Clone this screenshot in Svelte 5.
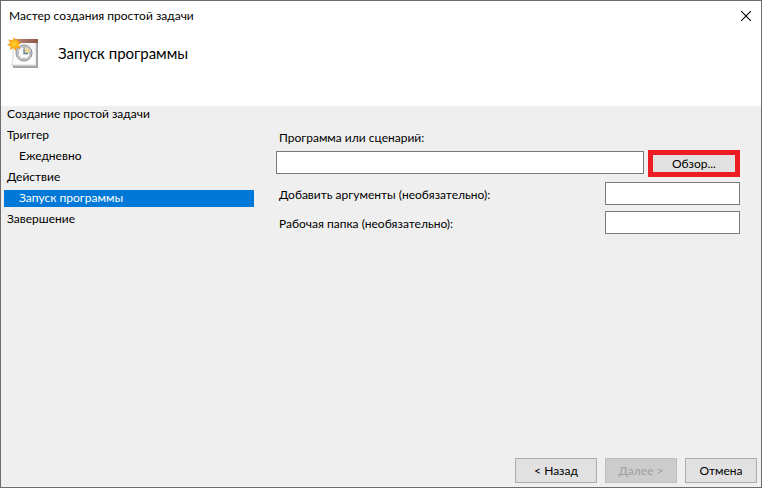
<script lang="ts">
	const steps = [
		{ title: 'Создание простой задачи', nested: false },
		{ title: 'Триггер', nested: false },
		{ title: 'Ежедневно', nested: true },
		{ title: 'Действие', nested: false },
		{ title: 'Запуск программы', nested: true },
		{ title: 'Завершение', nested: false }
	];

	const current = 4;

	let program = $state('');
	let args = $state('');
	let folder = $state('');
</script>

<main class="wizard">
	<header class="wizard__header">
		<div class="titlebar">
			<span class="titlebar__text">Мастер создания простой задачи</span>
			<button class="titlebar__close" type="button" aria-label="Закрыть">
				<svg viewBox="0 0 10 10" width="10" height="10" fill="none" stroke="#000" stroke-width="1.1">
					<path d="M0 0l10 10M10 0L0 10" />
				</svg>
			</button>
		</div>

		<div class="banner">
			<svg class="banner__icon" viewBox="0 0 32 32" width="32" height="32" aria-hidden="true">
				<defs>
					<linearGradient id="paper" x1="0" y1="0" x2="0" y2="1">
						<stop offset="0" stop-color="#f4f4f4" />
						<stop offset="1" stop-color="#fff" />
					</linearGradient>
					<linearGradient id="band" x1="0" y1="0" x2="1" y2="0">
						<stop offset="0" stop-color="#c08a76" />
						<stop offset="1" stop-color="#8c5848" />
					</linearGradient>
					<linearGradient id="rim" x1="0" y1="0" x2="1" y2="1">
						<stop offset="0" stop-color="#9a9ea2" />
						<stop offset="1" stop-color="#80868c" />
					</linearGradient>
					<radialGradient id="sun">
						<stop offset="0.2" stop-color="#ffc928" />
						<stop offset="1" stop-color="#f58f0c" />
					</radialGradient>
				</defs>
				<!-- Pages -->
				<path d="M6 5h25v26H6z" fill="#a4a4a4" />
				<path d="M7 5h22v24H7z" fill="#dadada" />
				<path d="M6 5h23v23H4c2-3 2-7 2-12z" fill="url(#paper)" stroke="#c4c4c4" stroke-width="0.6" />
				<path d="M6 2h25v4H6z" fill="url(#band)" />
				<!-- Clock -->
				<circle cx="17" cy="16" r="8" fill="#d3d6d8" stroke="url(#rim)" stroke-width="1" />
				<circle cx="17" cy="16" r="6.200" fill="#f9f9f7" stroke="#94999e" stroke-width="0.8" />
				<path d="M17 16v-6a6 6 0 0 1 6 6z" fill="#f2d896" />
				<path d="M17 10v1M17 21v1M11 16h1M22 16h1" stroke="#8d9399" stroke-width="1" />
				<path d="M17 11.500v5h4" fill="none" stroke="#5b7f9e" stroke-width="1.300" />
				<!-- Sun -->
				<path
					d="M7 0l1.500 3.200L12 1.500l-.8 3.500L14.500 6l-3 2 2 3.500-3.500-.6L8.500 14 6.500 11 3 13l.5-3.800L0 8l3-2-1.500-3.500L5.500 3.200z"
					fill="url(#sun)"
				/>
			</svg>
			<h1 class="banner__title">Запуск программы</h1>
		</div>
	</header>

	<div class="wizard__body">
		<nav class="steps" aria-label="Шаги мастера">
			<ol class="steps__list">
				{#each steps as step, i}
					<li
						class="steps__item"
						class:steps__item--nested={step.nested}
						class:steps__item--current={i === current}
						aria-current={i === current ? 'step' : undefined}
					>
						{step.title}
					</li>
				{/each}
			</ol>
		</nav>

		<form class="action" id="action">
			<label class="action__label" for="program">Программа или сценарий:</label>
			<div class="action__row">
				<div class="field field--wide">
					<input id="program" class="field__input" type="text" bind:value={program} />
				</div>
				<button class="browse" type="button">Обзор...</button>
			</div>
			<div class="action__row">
				<label class="action__label" for="args">Добавить аргументы (необязательно):</label>
				<div class="field">
					<input id="args" class="field__input" type="text" bind:value={args} />
				</div>
			</div>
			<div class="action__row">
				<label class="action__label" for="folder">Рабочая папка (необязательно):</label>
				<div class="field">
					<input id="folder" class="field__input" type="text" bind:value={folder} />
				</div>
			</div>
		</form>
	</div>

	<footer class="wizard__footer">
		<button class="button button--back" type="button">&lt; Назад</button>
		<button class="button" type="submit" form="action" disabled>Далее &gt;</button>
		<button class="button" type="button">Отмена</button>
	</footer>
</main>

<style>
	:global(body) {
		margin: 0;
	}

	.wizard {
		box-sizing: border-box;
		display: flex;
		flex-direction: column;
		min-height: 100vh;
		border: 1px solid #6e6c6d;
		background: #efefef;
		color: #000;
		font: 12px/17px Lato, 'Open Sans', sans-serif;
	}

	.wizard button,
	.wizard input {
		box-sizing: border-box;
		margin: 0;
		border-radius: 0;
		color: inherit;
		font: inherit;
	}

	.wizard__header {
		padding-bottom: 35px;
		background: #fff;
	}

	.titlebar {
		display: flex;
		align-items: center;
		justify-content: space-between;
		height: 30px;
		padding-left: 8px;
	}

	.titlebar__text {
		padding-bottom: 2px;
	}

	.titlebar__close {
		display: flex;
		align-items: center;
		justify-content: center;
		width: 30px;
		height: 28px;
		padding: 0;
		border: 0;
		background: none;
	}

	.banner {
		display: flex;
		align-items: center;
		gap: 19px;
		padding: 6px 6px 2px;
	}

	.banner__title {
		margin: 0;
		font-size: 15px;
		font-weight: 400;
		line-height: 22px;
	}

	.wizard__body {
		display: flex;
		flex: 1;
		gap: 22px;
		padding: 0 21px 0 3px;
	}

	.steps {
		flex: 0 0 250px;
	}

	.steps__list {
		display: flex;
		flex-direction: column;
		gap: 4px;
		margin: 0;
		padding: 0;
		list-style: none;
	}

	.steps__item {
		padding: 0 3px 2px;
		line-height: 15px;
	}

	.steps__item--nested {
		padding-left: 15px;
	}

	.steps__item--current {
		background: #0078d7;
		color: #fff;
	}

	.action {
		display: flex;
		flex: 1;
		flex-direction: column;
		gap: 4px;
		padding-top: 21px;
	}

	.action__label {
		padding: 2px 0 0 3px;
	}

	.action__row {
		display: flex;
		align-items: center;
		justify-content: space-between;
	}

	.field {
		width: 135px;
		padding: 1px 0;
	}

	.field--wide {
		flex: 1;
		align-self: flex-start;
		margin-right: 4px;
	}

	.field__input {
		display: block;
		width: 100%;
		height: 23px;
		padding: 0 4px;
		border: 1px solid #7a7a7a;
		background: #fff;
	}

	.browse {
		width: 92px;
		height: 27px;
		padding: 0;
		border: 5px solid #ed1c24;
		background: #e1e1e1;
	}

	.wizard__footer {
		display: flex;
		justify-content: flex-end;
		gap: 8px;
		padding: 4px;
	}

	.button {
		width: 72px;
		height: 25px;
		padding: 0;
		border: 1px solid #adadad;
		background: #e1e1e1;
	}

	.button--back {
		width: 82px;
	}

	.wizard .button:disabled {
		border-color: #bfbfbf;
		background: #ccc;
		color: #a0a0a0;
	}
</style>
